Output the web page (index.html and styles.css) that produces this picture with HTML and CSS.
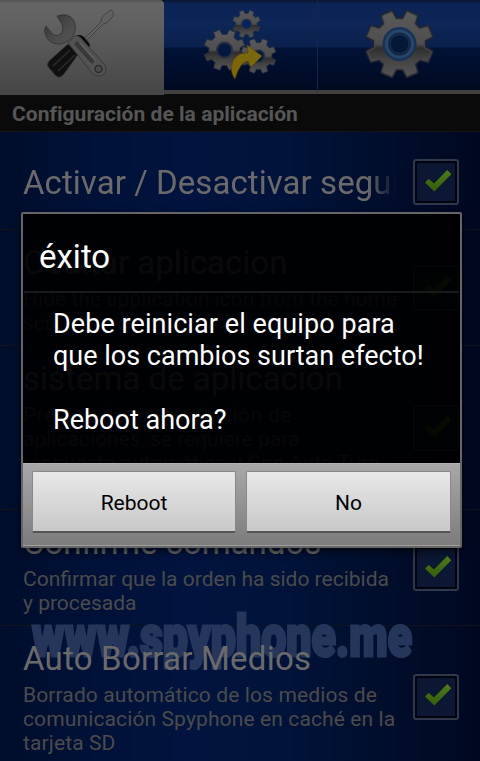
FILE: index.html
```html
<!DOCTYPE html>
<html lang="es">
<head>
<meta charset="utf-8">
<title>Configuración de la aplicación</title>
<link rel="stylesheet" href="styles.css">
</head>
<body>
<svg class="defs" width="0" height="0" aria-hidden="true">
  <defs>
    <linearGradient id="metal" x1="0" y1="0" x2="0" y2="1">
      <stop offset="0" stop-color="#5a5a5a"/><stop offset=".5" stop-color="#4e4e4e"/>
      <stop offset=".56" stop-color="#2e2e2e"/><stop offset=".75" stop-color="#444"/><stop offset="1" stop-color="#545454"/>
    </linearGradient>
    <linearGradient id="tick-fill" x1="0" y1="0" x2="0" y2="1">
      <stop offset="0" stop-color="#4f7d17"/><stop offset="1" stop-color="#355c08"/>
    </linearGradient>
    <linearGradient id="gold" x1="0" y1="0" x2="0" y2="1">
      <stop offset="0" stop-color="#776814"/><stop offset="1" stop-color="#806600"/>
    </linearGradient>
    <linearGradient id="jaw" x1="0" y1="0" x2="1" y2="1">
      <stop offset="0" stop-color="#303030"/><stop offset=".6" stop-color="#4c4c4c"/><stop offset="1" stop-color="#555"/>
    </linearGradient>
    <path id="cog" stroke-linejoin="round" d="M24.7 3.7 32.1 7.7 28.1 17.2 20.1 14.9 14.9 20.1 17.2 28.1 7.7 32.1 3.7 24.7H-3.7L-7.7 32.1-17.2 28.1-14.9 20.1-20.1 14.9-28.1 17.2-32.1 7.7-24.7 3.7V-3.7L-32.1-7.7-28.1-17.2-20.1-14.9-14.9-20.1-17.2-28.1-7.7-32.1-3.7-24.7H3.7L7.7-32.1 17.2-28.1 14.9-20.1 20.1-14.9 28.1-17.2 32.1-7.7 24.7-3.7Z"/>
    <path id="tick" d="M0 12.5 3.7 9 9 13.4 22.3 0 26.3 4.3 9.3 21.5Z"/>
  </defs>
</svg>
<div class="screen">
  <nav class="tabs">
    <div class="tab tab-active">
      <svg width="80" height="80" viewBox="40 4 80 80">
        <path d="M84 39 101 22Q101 17 105 14L111 10Q115 12 113 16L109 21Q106 24 103 24L86 41Z" fill="#606060" stroke="#424242" stroke-width="1"/>
        <path d="M49 61 68 44 79 53 64 74Q60 79 56 76L49 68Q46 65 49 61Z" fill="#101010" stroke="#333" stroke-width=".8"/>
        <path d="M53 66 70 50M58 71 75 55" stroke="#2c2c2c" stroke-width="1.600"/>
        <path d="M75 37Q79 33 84 37L89 43Q91 46 88 48Z" fill="#080808"/>
        <path d="M57 16Q69 12 74 21Q77 28 73 36Q69 42 61 44Q50 45 46 36Q43 30 46 26L53 35Q58 37 62 33Q64 29 62 24Z" fill="url(#jaw)" stroke="#333" stroke-width=".9"/>
        <path d="M68 43 75 36Q78 35 81 38L104 64Q108 70 104 74Q99 78 93 74Z" fill="#525252" stroke="#363636" stroke-width=".9"/>
        <path d="M77 44 92 61" stroke="#393939" stroke-width="4.500" stroke-linecap="round"/>
        <path d="M80 43 95 60" stroke="#606060" stroke-width="1.500" stroke-linecap="round"/>
        <circle cx="98.500" cy="69" r="3.500" fill="#4c4c4c" stroke="#2d2d2d" stroke-width="1.500"/>
      </svg>
    </div>
    <div class="tab">
      <svg width="80" height="80" viewBox="201 4 80 80">
        <g transform="translate(-2 0)">
          <g fill="url(#metal)" stroke="#283040" stroke-width="1.500">
            <g transform="translate(248.500 24) scale(.43)"><use href="#cog"/><circle r="11" fill="#06245c" stroke-width="3"/></g>
            <g transform="translate(260.500 56) scale(.54)"><use href="#cog"/><circle r="11" fill="#03183f" stroke-width="3"/></g>
            <g transform="translate(226.500 50) scale(.63)"><use href="#cog"/><circle r="12" fill="#03183f" stroke-width="3"/></g>
          </g>
          <path d="M249 45 264 56 253 67 250 61Q242 62 237 79Q231 71 235 61Q240 52 250 53Z" fill="url(#gold)" stroke="#55420a" stroke-width=".6"/>
        </g>
      </svg>
    </div>
    <div class="tab">
      <svg width="80" height="80" viewBox="359 4 80 80">
        <g transform="translate(399.500 44)">
          <use href="#cog" fill="url(#metal)" stroke="#22262e" stroke-width="4"/>
          <use href="#cog" fill="url(#metal)" stroke="#4c4c4c" stroke-width="1"/>
          <circle r="17" fill="#183353"/>
          <circle r="13" fill="#12284a" stroke="#28456a" stroke-width="3"/>
          <circle r="9.500" fill="#061838" stroke="#15294a" stroke-width="1.500"/>
        </g>
      </svg>
    </div>
  </nav>
  <h1 class="caption"><span>Configuración de la aplicación</span></h1>
  <main class="settings">
    <section class="row row-single">
      <div class="copy"><h2 class="fade">Activar / Desactivar segui</h2></div>
      <span class="check"><svg width="27" height="22"><use href="#tick" fill="url(#tick-fill)"/></svg></span>
    </section>
    <section class="row">
      <div class="copy"><h2>Ocultar aplicacion</h2><p>Hide the application icon from the home<br>screen</p></div>
      <span class="check"><svg width="27" height="22"><use href="#tick" fill="url(#tick-fill)"/></svg></span>
    </section>
    <section class="row row-tall">
      <div class="copy"><h2>sistema de aplicación</h2><p><span class="spread">Precisa de la instalación de</span><br>aplicaciones, se requiere para<br>respuesta automática y Gps Auto Turn<br>On</p></div>
      <span class="check"><svg width="27" height="22"><use href="#tick" fill="url(#tick-fill)"/></svg></span>
    </section>
    <section class="row">
      <div class="copy"><h2>Confirme comandos</h2><p>Confirmar que la orden ha sido recibida<br>y procesada</p></div>
      <span class="check"><svg width="27" height="22"><use href="#tick" fill="url(#tick-fill)"/></svg></span>
    </section>
    <section class="row row-last">
      <div class="copy"><h2>Auto Borrar Medios</h2><p>Borrado automático de los medios de<br>comunicación Spyphone en caché en la<br>tarjeta SD</p></div>
      <span class="check"><svg width="27" height="22"><use href="#tick" fill="url(#tick-fill)"/></svg></span>
    </section>
  </main>
  <svg class="watermark" width="400" height="70" viewBox="20 606 400 70">
    <text x="32" y="655.500" textLength="380" lengthAdjust="spacingAndGlyphs">www.spyphone.me</text>
  </svg>
  <div class="dialog" role="dialog">
    <h3 class="dialog-title">éxito</h3>
    <p class="message"><span class="line-wide">Debe reiniciar el equipo para</span><br>que los cambios surtan efecto!<br><br>Reboot ahora?</p>
    <div class="actions"><button>Reboot</button><button>No</button></div>
  </div>
</div>
</body>
</html>
```
FILE: styles.css
```css
* { box-sizing: border-box; }
body { margin: 0; background: #000e2e; font-family: Roboto, "Liberation Sans", sans-serif; }
h1, h2, h3, p { margin: 0; font-weight: 400; }
.defs { position: absolute; }
.screen {
  position: relative;
  width: 480px;
  height: 761px;
  overflow: hidden;
  background: linear-gradient(90deg, #000d2b 0, #001136 15%, #00143f 40%, #00133a 58%, #000e2c 80%, #000820 100%);
}
.tabs { display: grid; grid-template-columns: 164px 153px 163px; height: 95px; background: #0a0a0a; }
.tab {
  display: flex;
  justify-content: center;
  height: 94px;
  padding-top: 4px;
  border-bottom: 4px solid #404040;
  background: linear-gradient(180deg, #091630 0, #0c2455 4px, #0d2657 24px, #0b204c 47px, #001237 48px, #000a20 90px);
}
.tab + .tab + .tab { border-left: 1px solid #15254a; border-bottom-color: #404040; }
.tab-active { height: 95px; border: 0; border-top-right-radius: 4px; background: linear-gradient(180deg, #505050 0, #656565 3px, #626262 20px, #454545 100%); }
.tab-active svg { margin-left: -4px; }
.caption { height: 37px; padding-left: 12px; border-bottom: 1px solid #151515; background: #0a0a0a; color: #565656; font-size: 21px; font-weight: 700; line-height: 38px; letter-spacing: .03px; white-space: nowrap; }
.row { display: flex; align-items: center; justify-content: space-between; height: 116px; padding: 1px 21px 0 23px; border-bottom: 1px solid #10131a; }
.row-single { height: 98px; padding-top: 3px; }
.row-tall { height: 164px; }
.row-last { height: 140px; border: 0; }
.copy { position: relative; z-index: 1; width: 375px; padding-top: 2px; }
.row-single .copy, .row-last .copy { padding-top: 0; }
.copy h2 { color: #6a6a6a; font-size: 33px; line-height: 39px; white-space: nowrap; overflow: hidden; }
.row-last .copy h2 { letter-spacing: .22px; }
.copy .fade { letter-spacing: .06px; -webkit-mask-image: linear-gradient(90deg, #000 345px, transparent 373px); mask-image: linear-gradient(90deg, #000 345px, transparent 373px); }
.copy p { margin-top: 5px; color: #4b4b4b; font-size: 21px; line-height: 24px; white-space: nowrap; }
.row-last .copy p { letter-spacing: .12px; }
.copy .spread { letter-spacing: .5px; }
.check { display: flex; flex: none; align-items: center; justify-content: center; width: 46px; height: 46px; border: 2px solid #30384b; border-radius: 3px; background: #0b1733; box-shadow: inset 0 0 0 2px #00040f; }
.check svg { margin: -3px 0 0 4px; }
.watermark { position: absolute; left: 20px; top: 606px; }
.watermark text { font-family: Roboto, sans-serif; font-size: 58px; font-weight: 900; fill: #26365b; stroke: #26365b; stroke-width: 3px; }
.dialog {
  position: absolute;
  z-index: 2;
  left: 21px;
  top: 212px;
  width: 441px;
  height: 336px;
  border: 2px solid #666;
  border-radius: 2px;
  background: rgba(0, 0, 0, .91);
  box-shadow: 0 3px 9px rgba(0, 0, 0, .65);
  color: #fff;
}
.dialog-title { height: 79px; margin: 0 1px; padding: 23px 0 0 15px; border-bottom: 2px solid #181a1e; font-size: 33px; line-height: 40px; }
.message { height: 170px; padding: 15px 0 0 30px; font-size: 27px; line-height: 32px; white-space: nowrap; }
.line-wide { letter-spacing: .07px; }
.actions { display: grid; grid-template-columns: 204px 205px; column-gap: 10px; height: 83px; padding: 7px 9px 12px; background: linear-gradient(180deg, #a8a8a8, #7c7c7c); border-top: 1px solid #b4b4b4; border-bottom: 1px solid #a0a0a0; }
.actions button { padding: 2px 0 0; border: 1px solid #888; border-bottom: 2px solid #555; border-radius: 2px; background: linear-gradient(180deg, #e8e8e8, #c8c8c8); color: #000; font: 400 21px/24px Roboto, sans-serif; }
```
